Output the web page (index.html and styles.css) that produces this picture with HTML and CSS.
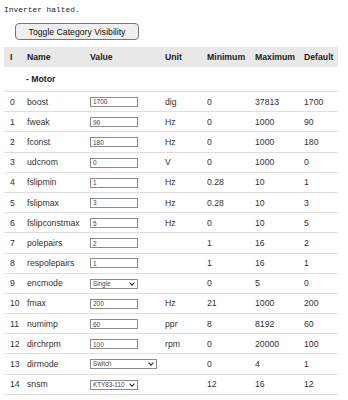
FILE: index.html
```html
<!DOCTYPE html>
<html>
<head>
    <meta charset="utf-8">
    <title>Parameters</title>
    <link rel="stylesheet" href="styles.css">
</head>
<body>
    <pre class="Status">Inverter halted.</pre>
    <button class="Toggle">Toggle Category Visibility</button>

    <table class="Params">
        <colgroup>
            <col class="ColIdx">
            <col class="ColName">
            <col class="ColValue">
            <col class="ColUnit">
            <col class="ColMin">
            <col class="ColMax">
            <col class="ColDef">
        </colgroup>
        <tr class="Heading">
            <th>I</th><th>Name</th><th>Value</th><th>Unit</th><th>Minimum</th><th>Maximum</th><th>Default</th>
        </tr>
        <tr class="Category">
            <td></td><td colspan="6">- Motor</td>
        </tr>
        <tr><td>0</td><td>boost</td><td><input type="text" value="1700"></td><td>dig</td><td>0</td><td>37813</td><td>1700</td></tr>
        <tr><td>1</td><td>fweak</td><td><input type="text" value="90"></td><td>Hz</td><td>0</td><td>1000</td><td>90</td></tr>
        <tr><td>2</td><td>fconst</td><td><input type="text" value="180"></td><td>Hz</td><td>0</td><td>1000</td><td>180</td></tr>
        <tr><td>3</td><td>udcnom</td><td><input type="text" value="0"></td><td>V</td><td>0</td><td>1000</td><td>0</td></tr>
        <tr><td>4</td><td>fslipmin</td><td><input type="text" value="1"></td><td>Hz</td><td>0.28</td><td>10</td><td>1</td></tr>
        <tr><td>5</td><td>fslipmax</td><td><input type="text" value="3"></td><td>Hz</td><td>0.28</td><td>10</td><td>3</td></tr>
        <tr><td>6</td><td>fslipconstmax</td><td><input type="text" value="5"></td><td>Hz</td><td>0</td><td>10</td><td>5</td></tr>
        <tr><td>7</td><td>polepairs</td><td><input type="text" value="2"></td><td></td><td>1</td><td>16</td><td>2</td></tr>
        <tr><td>8</td><td>respolepairs</td><td><input type="text" value="1"></td><td></td><td>1</td><td>16</td><td>1</td></tr>
        <tr><td>9</td><td>encmode</td><td><span class="Pick Short"><select><option>Single</option><option>AB</option><option>ABZ</option></select></span></td><td></td><td>0</td><td>5</td><td>0</td></tr>
        <tr><td>10</td><td>fmax</td><td><input type="text" value="200"></td><td>Hz</td><td>21</td><td>1000</td><td>200</td></tr>
        <tr><td>11</td><td>numimp</td><td><input type="text" value="60"></td><td>ppr</td><td>8</td><td>8192</td><td>60</td></tr>
        <tr><td>12</td><td>dirchrpm</td><td><input type="text" value="100"></td><td>rpm</td><td>0</td><td>20000</td><td>100</td></tr>
        <tr><td>13</td><td>dirmode</td><td><span class="Pick Long"><select><option>Switch</option><option>Button</option></select></span></td><td></td><td>0</td><td>4</td><td>1</td></tr>
        <tr><td>14</td><td>snsm</td><td><span class="Pick Short"><select><option>KTY83-110</option><option>KTY84-130</option></select></span></td><td></td><td>12</td><td>16</td><td>12</td></tr>
    </table>
</body>
</html>
```

FILE: styles.css
```css
body {
    margin: 0;
    font-family: "Liberation Sans", Arial, sans-serif;
    font-size: 8.7px;
    color: #333;
}

.Status {
    margin: 0;
    padding: 5px 0 0 4px;
    font-family: "Liberation Mono", monospace;
    font-size: 7.9px;
    line-height: 9px;
    color: #222;
}

.Toggle {
    display: block;
    margin: 9px 0 0 15px;
    width: 124px;
    height: 17px;
    padding: 0;
    border: 1px solid #767676;
    border-radius: 4px;
    background: #efefef;
    font-family: "Liberation Sans", Arial, sans-serif;
    font-size: 8.7px;
    color: #111;
}

.Params {
    margin: 7px 0 0 4px;
    width: 334px;
    border-collapse: collapse;
    table-layout: fixed;
}

.ColIdx { width: 17px; }
.ColName { width: 63px; }
.ColValue { width: 75px; }
.ColUnit { width: 42px; }
.ColMin { width: 48px; }
.ColMax { width: 49px; }
.ColDef { width: 40px; }

.Params th,
.Params td {
    padding: 0 0 0 6px;
    text-align: left;
    white-space: nowrap;
    overflow: hidden;
}

.Heading th {
    height: 20px;
    background: #e8e8e8;
    font-weight: bold;
    color: #222;
}

.Params td {
    height: 19.2px;
    border-bottom: 1px solid #dedede;
}

.Category td {
    height: 24px;
    font-weight: bold;
    color: #222;
}

.Category td + td {
    padding-left: 5px;
}

.Params input,
.Params select {
    box-sizing: border-box;
    height: 10px;
    margin: 0;
    border: 1px solid #8b8b8b;
    border-radius: 0;
    background: #fff;
    font-family: "Liberation Sans", Arial, sans-serif;
    color: #444;
    vertical-align: middle;
}

.Params input {
    width: 48px;
    padding: 0 2px;
    font-size: 6.5px;
}

/* select with a drawn chevron */
.Pick {
    position: relative;
    display: inline-block;
    vertical-align: middle;
    line-height: 0;
}

.Pick select {
    -webkit-appearance: none;
    appearance: none;
    width: 100%;
    padding: 0 9px 0 2px;
    font-size: 6.3px;
    line-height: 8px;
}

.Pick::after {
    content: "";
    position: absolute;
    top: 2px;
    right: 4px;
    width: 3px;
    height: 3px;
    border-right: 1.6px solid #222;
    border-bottom: 1.6px solid #222;
    transform: rotate(45deg);
    pointer-events: none;
}

.Short { width: 48px; }
.Long { width: 67px; }
```
